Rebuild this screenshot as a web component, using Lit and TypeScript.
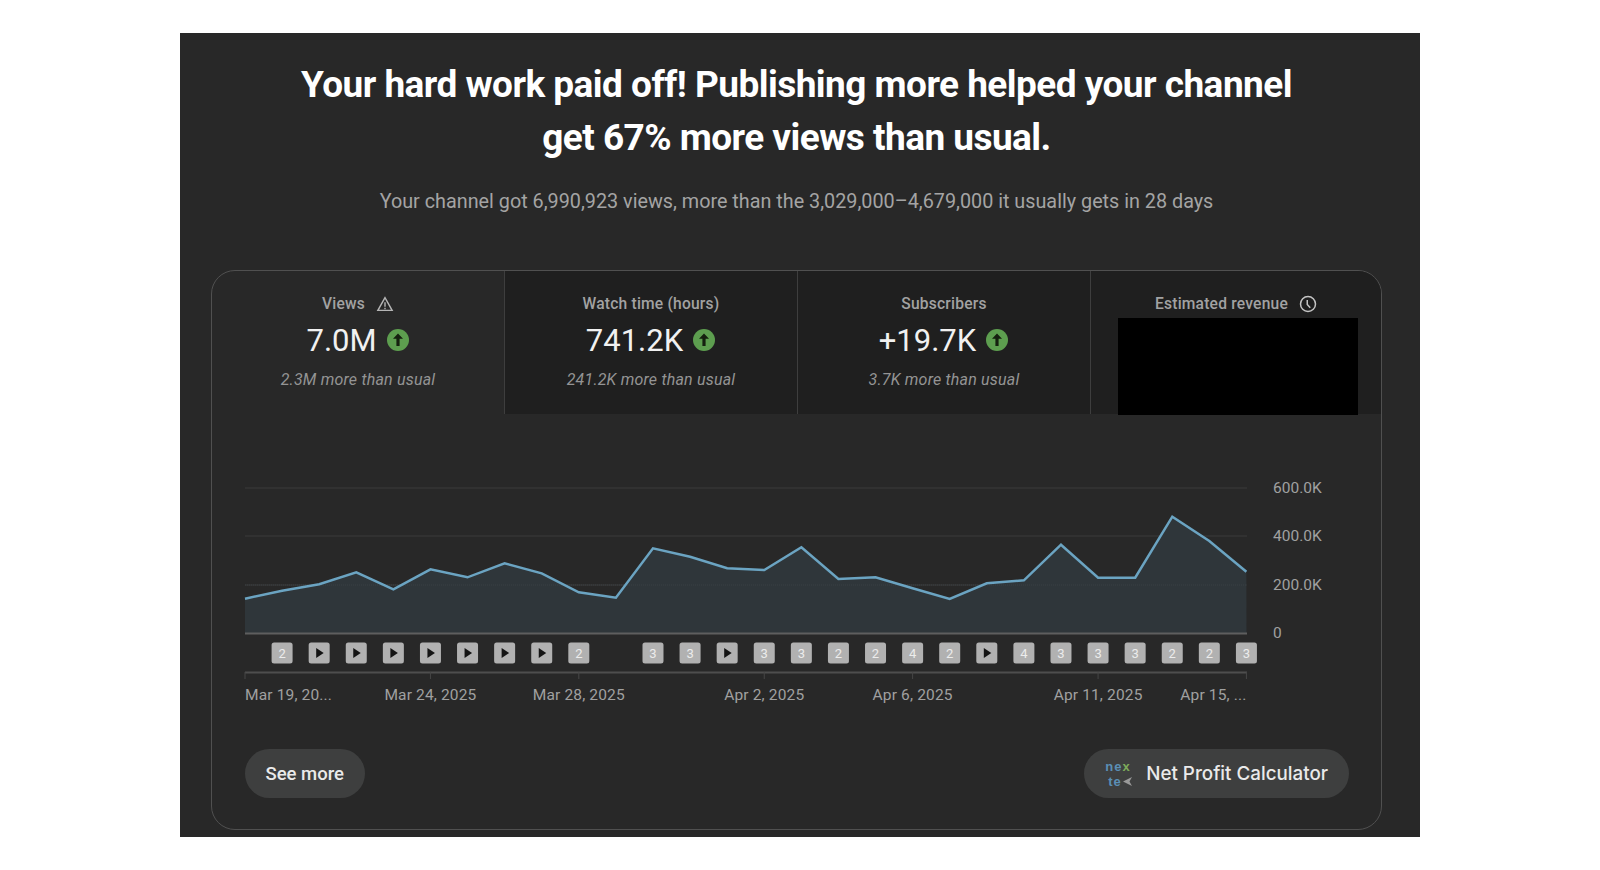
import { LitElement, html, css, svg } from "lit";
import { customElement } from "lit/decorators.js";

const L = 245, STEP = 37.09;
const X = (i: number) => L + i * STEP;
const YS = [598.7,590.7,584.3,572.3,589.3,569.3,577.3,563.3,573.3,592.3,597.7,548.3,556.7,568.3,570,547.3,579,577.3,588.3,599,583.3,580.3,544.7,577.7,577.7,516.7,541,571.7];
const MARKS: (string | null)[] = [null,"2","p","p","p","p","p","p","p","2",null,"3","3","p","3","3","2","2","4","2","p","4","3","3","3","2","2","3"];
const TICKS: [number, string, string][] = [[0,"Mar 19, 20...","start"],[5,"Mar 24, 2025","middle"],[9,"Mar 28, 2025","middle"],[14,"Apr 2, 2025","middle"],[18,"Apr 6, 2025","middle"],[23,"Apr 11, 2025","middle"],[27,"Apr 15, ...","end"]];
const GRID: [number, string][] = [[488,"600.0K"],[536,"400.0K"],[585,"200.0K"]];

const arrow = html`<svg class="up" viewBox="0 0 22 22"><circle cx="11" cy="11" r="11" fill="#5d9e4f"/><path d="M11 4.5l-5 5.3h3.4V17h3.2V9.8H16z" fill="#15200f"/></svg>`;

@customElement("app-root")
export class AppRoot extends LitElement {
  static styles = css`
    :host { display: block; background: #fff; padding: 33px 180px; font-family: Roboto, "Liberation Sans", sans-serif; }
    .panel { background: #282828; height: 804px; box-sizing: border-box; padding: 25px 38px 7px 31px; display: flex; flex-direction: column; }
    h1 { margin: 0; color: #fff; font-size: 37px; line-height: 53px; font-weight: 700; text-align: center; letter-spacing: -0.54px; }
    .sub { margin: 25px 0 0; color: #a4a4a4; font-size: 19.8px; line-height: 26px; text-align: center; }
    .card { margin-top: 55px; flex: 1; border: 1px solid #505050; border-radius: 24px; display: flex; flex-direction: column; overflow: hidden; position: relative; }
    .tabs { display: grid; grid-template-columns: 292px 293px 293px 1fr; height: 143px; }
    .tab { background: #1f1f1f; border-left: 1px solid #3e3e3e; display: flex; flex-direction: column; align-items: center; padding-top: 23px; box-sizing: border-box; }
    .tab:first-child { background: transparent; border-left: 0; }
    .label { display: flex; align-items: center; gap: 11px; height: 20px; color: #a2a2a2; font-size: 15.6px; font-weight: 500; letter-spacing: 0.2px; }
    .label svg { width: 18px; height: 18px; }
    .value { display: flex; align-items: center; gap: 10px; margin: 5px 1px 0 0; height: 42px; color: #f1f1f1; font-size: 31px; }
    .up { width: 22px; height: 22px; }
    .note { margin-top: 9px; color: #949494; font-size: 16px; line-height: 20px; font-style: italic; letter-spacing: 0.2px; }
    .redact { position: absolute; left: 906px; top: 47px; width: 240px; height: 97px; background: #000; }
    .chart { display: block; width: 1169px; height: 300px; }
    .chart text { font-family: Roboto, "Liberation Sans", sans-serif; }
    .actions { display: flex; justify-content: space-between; align-items: center; padding: 35px 32px 0 33px; }
    .btn { height: 49px; box-sizing: border-box; border-radius: 25px; background: #3e3f3f; color: #eaeaea; font-size: 18.5px; font-weight: 500; display: flex; align-items: center; padding: 0 20.5px; }
    .btn.calc { padding: 0 21px; gap: 11px; font-family: Inter, Roboto, sans-serif; font-size: 18.8px; }
    .logo { width: 30px; height: 30px; display: flex; flex-direction: column; font: 700 13px/15px "Liberation Sans", sans-serif; letter-spacing: 1px; color: #5b8fb5; }
    .logo i { font-style: normal; color: #7dab5a; }
    .logo span { display: flex; align-items: center; padding-left: 3px; }
    .logo span:first-child { padding-left: 0; }
    .logo svg { width: 9px; height: 9px; margin-left: 1px; }
  `;

  render() {
    const line = YS.map((y, i) => `${X(i).toFixed(1)},${y}`).join(" ");
    return html`<div class="panel">
      <h1>Your hard work paid off! Publishing more helped your channel<br>get 67% more views than usual.</h1>
      <p class="sub">Your channel got 6,990,923 views, more than the 3,029,000–4,679,000 it usually gets in 28 days</p>
      <div class="card">
        <div class="tabs">
          <div class="tab">
            <div class="label">Views
              <svg viewBox="0 0 24 24" fill="none" stroke="#b5b5b5" stroke-width="1.9"><path d="M12 3.5L2.5 20.5h19z"/><path d="M12 9.5v6M12 17v2"/></svg>
            </div>
            <div class="value">7.0M ${arrow}</div>
            <div class="note">2.3M more than usual</div>
          </div>
          <div class="tab">
            <div class="label">Watch time (hours)</div>
            <div class="value">741.2K ${arrow}</div>
            <div class="note">241.2K more than usual</div>
          </div>
          <div class="tab">
            <div class="label">Subscribers</div>
            <div class="value">+19.7K ${arrow}</div>
            <div class="note">3.7K more than usual</div>
          </div>
          <div class="tab">
            <div class="label">Estimated revenue
              <svg viewBox="0 0 24 24" fill="none" stroke="#c4c4c4" stroke-width="2"><circle cx="12" cy="12" r="10"/><path d="M11 6.5v6l4 4.5"/></svg>
            </div>
          </div>
        </div>
        <div class="redact"></div>
        <svg class="chart" viewBox="212 414 1169 300">
          ${GRID.map(([y, t]) => svg`<line x1="${L}" x2="1247" y1="${y}" y2="${y}" stroke="#3b3b3b"/>
            <text x="1273" y="${y + 5}" font-size="15.5" fill="#a0a0a0">${t}</text>`)}
          <polygon points="${L},633 ${line} 1246.5,633" fill="#2f363a"/>
          ${GRID.slice(2).map(([y]) => svg`<line x1="${L}" x2="1247" y1="${y}" y2="${y}" stroke="#3a4044" stroke-dasharray="1 1"/>`)}
          <polyline points="${line}" fill="none" stroke="#6ba4c2" stroke-width="2.5"/>
          <line x1="${L}" x2="1247" y1="633.5" y2="633.5" stroke="#5e5e5e" stroke-width="2"/>
          <text x="1273" y="638" font-size="15.5" fill="#a0a0a0">0</text>
          ${MARKS.map((m, i) => {
            if (!m) return null;
            const x = X(i), y = 653;
            return svg`<rect x="${x - 10.5}" y="${y - 10.5}" width="21" height="21" rx="2.5" fill="#b1b1b1"/>
              ${m === "p"
                ? svg`<path d="M${x - 3} ${y - 5}L${x + 4.5} ${y}L${x - 3} ${y + 5}z" fill="#141414"/>`
                : svg`<text x="${x}" y="${y + 4.5}" font-size="13" text-anchor="middle" fill="#ececec">${m}</text>`}`;
          })}
          <line x1="${L}" x2="1247" y1="672.5" y2="672.5" stroke="#4e4e4e" stroke-width="2"/>
          ${TICKS.map(([i, t, a]) => svg`<line x1="${X(i)}" x2="${X(i)}" y1="672" y2="679" stroke="#464646"/>
            <text x="${X(i)}" y="700" font-size="15.5" fill="#a0a0a0" text-anchor="${a}" letter-spacing="0.15">${t}</text>`)}
        </svg>
        <div class="actions">
          <div class="btn">See more</div>
          <div class="btn calc">
            <span class="logo"><span>ne<i>x</i></span><span>te<svg viewBox="0 0 9 9"><path d="M9 0L0 4.5 9 9 6.5 4.5z" fill="#9a9a9a"/></svg></span></span>
            Net Profit Calculator
          </div>
        </div>
      </div>
    </div>`;
  }
}
